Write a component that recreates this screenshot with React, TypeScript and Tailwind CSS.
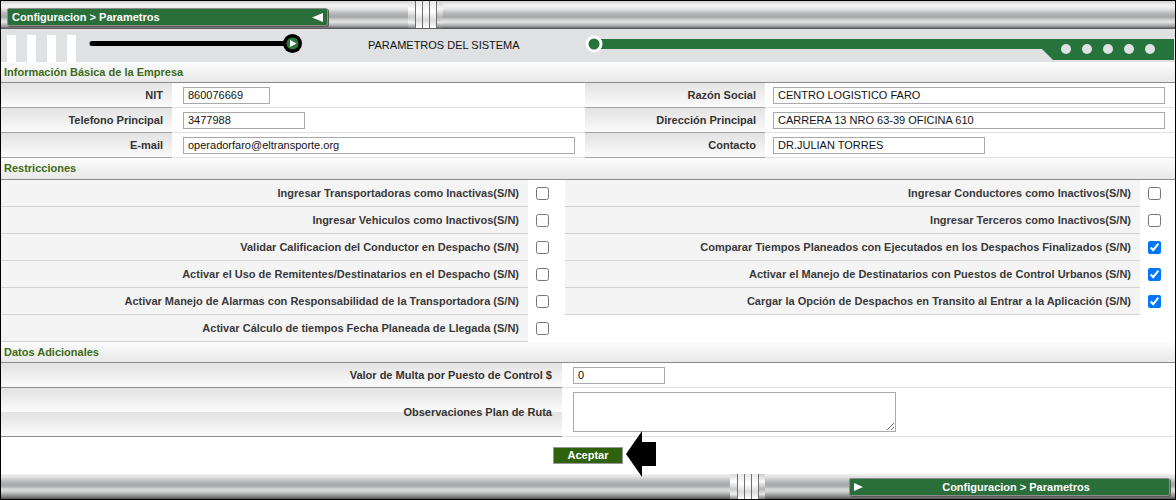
import React from 'react';

const leftChecks = [
  { label: 'Ingresar Transportadoras como Inactivas(S/N)', checked: false },
  { label: 'Ingresar Vehiculos como Inactivos(S/N)', checked: false },
  { label: 'Validar Calificacion del Conductor en Despacho (S/N)', checked: false },
  { label: 'Activar el Uso de Remitentes/Destinatarios en el Despacho (S/N)', checked: false },
  { label: 'Activar Manejo de Alarmas con Responsabilidad de la Transportadora (S/N)', checked: false },
  { label: 'Activar Cálculo de tiempos Fecha Planeada de Llegada (S/N)', checked: false },
];

const rightChecks = [
  { label: 'Ingresar Conductores como Inactivos(S/N)', checked: false },
  { label: 'Ingresar Terceros como Inactivos(S/N)', checked: false },
  { label: 'Comparar Tiempos Planeados con Ejecutados en los Despachos Finalizados (S/N)', checked: true },
  { label: 'Activar el Manejo de Destinatarios con Puestos de Control Urbanos (S/N)', checked: true },
  { label: 'Cargar la Opción de Despachos en Transito al Entrar a la Aplicación (S/N)', checked: true },
];

const labelBg = 'bg-[linear-gradient(to_bottom,#e2e2e2,#fbfbfb)]';

const Stripes = () => (
  <div className="flex h-full">
    <div className="w-[7px] h-full bg-[linear-gradient(to_bottom,#d8d8d8,#ffffff_30%,#c9c9c9_60%,#f2f2f2_80%,#8a8a8a)]" />
    <div className="w-px h-full bg-[#6f6f6f]" />
    <div className="w-[6px] h-full bg-[linear-gradient(to_bottom,#e8e8e8,#ffffff_40%,#dcdcdc_70%,#ffffff)]" />
    <div className="w-px h-full bg-[#6f6f6f]" />
    <div className="w-[6px] h-full bg-[linear-gradient(to_bottom,#e8e8e8,#ffffff_40%,#dcdcdc_70%,#ffffff)]" />
    <div className="w-px h-full bg-[#6f6f6f]" />
    <div className="w-[6px] h-full bg-[linear-gradient(to_bottom,#e8e8e8,#ffffff_40%,#dcdcdc_70%,#ffffff)]" />
    <div className="w-px h-full bg-[#6f6f6f]" />
    <div className="w-[6px] h-full bg-[linear-gradient(to_bottom,#d0d0d0,#f6f6f6_30%,#b5b5b5_60%,#e6e6e6_80%,#7a7a7a)]" />
  </div>
);

const Crumb = ({ dir }: { dir: 'left' | 'right' }) => (
  <div className="w-[321px] h-[18px] border border-[#8d8d8d] rounded-[2px] bg-[#2a6e3a] flex items-center text-white font-bold text-[11px] shadow-[1px_1px_0_#5a5a5a]">
    {dir === 'left' ? (
      <>
        <span className="pl-[4px] flex-1">Configuracion &gt; Parametros</span>
        <svg width="11" height="9" viewBox="0 0 11 9" className="mr-[4px]">
          <polygon points="0,4.5 11,0 11,9" fill="#ffffff" />
        </svg>
      </>
    ) : (
      <>
        <svg width="9" height="8" viewBox="0 0 9 8" className="ml-[4px]">
          <polygon points="0,0 9,4 0,8" fill="#ffffff" />
        </svg>
        <span className="flex-1 text-center">Configuracion &gt; Parametros</span>
      </>
    )}
  </div>
);

const SectionHeader = ({ title, h }: { title: string; h: string }) => (
  <div className={`${h} flex items-center pl-[3px] border-b border-[#8c8c8c] bg-[linear-gradient(to_bottom,#fcfcfc,#e8e8e8)] text-[#3d6b16] font-bold text-[11px]`}>
    {title}
  </div>
);

const Field = ({ value, w }: { value: string; w: string }) => (
  <input
    defaultValue={value}
    className={`${w} h-[17px] border border-[#a9a9a9] bg-white px-[4px] text-[11px] text-[#111] outline-none`}
  />
);

const InfoRow = ({
  l1, v1, w1, l2, v2, w2,
}: { l1: string; v1: string; w1: string; l2: string; v2: string; w2: string }) => (
  <div className="flex h-[25px]">
    <div className={`w-[171px] ${labelBg} border-b border-[#a3a3a3] flex items-center justify-end pr-[9px] font-bold text-[#333]`}>{l1}</div>
    <div className="w-[408px] border-b border-[#e2e2e2] flex items-center pl-[11px]">
      <Field value={v1} w={w1} />
    </div>
    <div className="w-[5px] border-b border-[#e2e2e2]" />
    <div className={`w-[180px] ${labelBg} border-b border-[#a3a3a3] flex items-center justify-end pr-[9px] font-bold text-[#333]`}>{l2}</div>
    <div className="flex-1 border-b border-[#e2e2e2] flex items-center pl-[8px]">
      <Field value={v2} w={w2} />
    </div>
  </div>
);

const App: React.FC = () => {
  return (
    <div className="w-[1176px] h-[500px] border border-black bg-white overflow-hidden flex flex-col font-['Liberation_Sans',Arial,sans-serif] text-[11px] text-[#333]">
      {/* top bar */}
      <div className="h-[28px] shrink-0 flex items-start bg-[linear-gradient(to_bottom,#cfcfcf_0px,#f4f4f4_4px,#e6e6e6_8px,#b9bbbc_12px,#a4a6a7_16px,#d4d6d6_19px,#e4e4e4_21px,#b2b4b5_24px,#8e9091_26px,#5c5c5c_27px)]">
        <div className="pl-[6px] pt-[7px]">
          <Crumb dir="left" />
        </div>
        <div className="ml-[80px] h-[27px]">
          <Stripes />
        </div>
      </div>

      {/* title band */}
      <div className="h-[33px] shrink-0 bg-[#dfe1e3] flex items-start">
        <div className="pl-[6px] pt-[6px] flex gap-[11px]">
          <div className="w-[9px] h-[27px] bg-white" />
          <div className="w-[9px] h-[27px] bg-white" />
          <div className="w-[9px] h-[27px] bg-white" />
          <div className="w-[9px] h-[27px] bg-white" />
        </div>
        <svg width="216" height="33" viewBox="0 0 216 33" className="ml-[12px]">
          <line x1="4" y1="14.5" x2="200" y2="14.5" stroke="#000" strokeWidth="5" strokeLinecap="round" />
          <circle cx="204.5" cy="14.5" r="9.5" fill="#000" />
          <circle cx="204.5" cy="14.5" r="6" fill="#2b7a3b" />
          <polygon points="202,11 208.5,14.5 202,18" fill="#ffffff" />
        </svg>
        <div className="w-[216px] h-[33px] ml-[64px] flex items-center text-[11px] text-[#111]">PARAMETROS DEL SISTEMA</div>
        <svg width="590" height="33" viewBox="0 0 590 33">
          <rect x="10" y="10" width="580" height="10" fill="#26733b" />
          <polygon points="458,10 590,10 590,31 469,31 458,20" fill="#26733b" />
          <circle cx="10" cy="15" r="8.5" fill="#ffffff" />
          <circle cx="10" cy="15" r="5.5" fill="#26733b" />
          <circle cx="482" cy="20" r="5" fill="#dfe1e3" />
          <circle cx="503" cy="20" r="5" fill="#dfe1e3" />
          <circle cx="524" cy="20" r="5" fill="#dfe1e3" />
          <circle cx="545" cy="20" r="5" fill="#dfe1e3" />
          <circle cx="566" cy="20" r="5" fill="#dfe1e3" />
        </svg>
      </div>

      <SectionHeader title="Información Básica de la Empresa" h="h-[21px] shrink-0" />
      <InfoRow l1="NIT" v1="860076669" w1="w-[87px]" l2="Razón Social" v2="CENTRO LOGISTICO FARO" w2="w-[392px]" />
      <InfoRow l1="Telefono Principal" v1="3477988" w1="w-[122px]" l2="Dirección Principal" v2="CARRERA 13 NRO 63-39 OFICINA 610" w2="w-[392px]" />
      <InfoRow l1="E-mail" v1="operadorfaro@eltransporte.org" w1="w-[392px]" l2="Contacto" v2="DR.JULIAN TORRES" w2="w-[212px]" />

      <SectionHeader title="Restricciones" h="h-[22px] shrink-0" />
      {leftChecks.map((item, i) => {
        const right = rightChecks[i];
        return (
          <div key={i} className="flex h-[27px] shrink-0">
            <div className="w-[527px] bg-[#f4f4f4] border-b border-[#d2d2d2] flex items-center justify-end pr-[9px] font-bold text-[#3a3a3a]">
              {item.label}
            </div>
            <div className="w-[37px] flex items-center pl-[8px]">
              <input type="checkbox" defaultChecked={item.checked} className="m-0 w-[13px] h-[13px]" />
            </div>
            {right ? (
              <>
                <div className="w-[575px] bg-[#f4f4f4] border-b border-[#d2d2d2] flex items-center justify-end pr-[9px] font-bold text-[#3a3a3a]">
                  {right.label}
                </div>
                <div className="flex-1 flex items-center pl-[8px]">
                  <input type="checkbox" defaultChecked={right.checked} className="m-0 w-[13px] h-[13px]" />
                </div>
              </>
            ) : (
              <div className="flex-1" />
            )}
          </div>
        );
      })}

      <SectionHeader title="Datos Adicionales" h="h-[21px] shrink-0" />
      <div className="flex h-[25px] shrink-0">
        <div className={`w-[561px] ${labelBg} border-b border-[#8c8c8c] flex items-center justify-end pr-[10px] font-bold text-[#333]`}>
          Valor de Multa por Puesto de Control $
        </div>
        <div className="flex-1 border-b border-[#e2e2e2] flex items-center pl-[11px]">
          <Field value="0" w="w-[92px]" />
        </div>
      </div>
      <div className="flex h-[49px] shrink-0">
        <div className="w-[561px] bg-[linear-gradient(to_bottom,#e2e2e2,#fbfbfb)] bg-[length:100%_24px] bg-repeat-y border-b border-[#8c8c8c] flex items-center justify-end pr-[10px] font-bold text-[#333]">
          Observaciones Plan de Ruta
        </div>
        <div className="flex-1 border-b border-[#e2e2e2] flex items-center pl-[11px]">
          <textarea className="w-[323px] h-[40px] border border-[#a9a9a9] bg-white text-[11px] outline-none" />
        </div>
      </div>

      {/* action */}
      <div className="h-[37px] shrink-0 flex items-center justify-center">
        <div className="relative">
          <button className="w-[70px] h-[17px] bg-[#2f620c] border border-[#9a9a9a] text-white font-bold text-[11px] leading-none">
            Aceptar
          </button>
          <svg width="31" height="48" viewBox="0 0 31 48" className="absolute left-[73px] top-[-17px]">
            <polygon points="0,24 16,1 16,12 30,12 30,36 16,36 16,47" fill="#000" />
          </svg>
        </div>
      </div>

      {/* bottom bar */}
      <div className="h-[25px] shrink-0 flex items-start bg-[linear-gradient(to_bottom,#f2f2f2_0px,#e2e2e2_3px,#c4c6c7_6px,#a6a8a9_10px,#b0b2b3_13px,#dadcdc_15px,#cfd1d1_18px,#a9abac_20px,#7c7e7f_23px,#5c5c5c_24px)]">
        <div className="ml-[729px] h-[25px]">
          <Stripes />
        </div>
        <div className="ml-[84px] pt-[4px]">
          <Crumb dir="right" />
        </div>
      </div>
    </div>
  );
};

export default App;
